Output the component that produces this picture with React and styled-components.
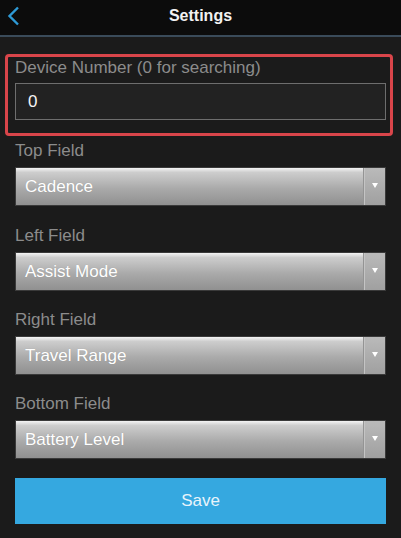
import React from 'react';
import styled, { createGlobalStyle } from 'styled-components';

const GlobalStyle = createGlobalStyle`
  html, body {
    margin: 0;
    padding: 0;
    background: #1b1b1b;
    font-family: "Liberation Sans", Arial, sans-serif;
  }
`;

const Page = styled.div`
  width: 401px;
  height: 538px;
  background: #1b1b1b;
  overflow: hidden;
`;

const Header = styled.div`
  position: relative;
  height: 35px;
  background: #0c0c0c;
  border-bottom: 2px solid #3a4b5a;
  display: flex;
  align-items: center;
  justify-content: center;
`;

const Back = styled.svg`
  position: absolute;
  left: 7px;
  top: 6px;
`;

const Title = styled.div`
  color: #f2f2f2;
  font-size: 16px;
  font-weight: bold;
  margin-top: -4px;
`;

const Body = styled.div`
  padding: 17px 15px 0 15px;
  display: flex;
  flex-direction: column;
`;

const Highlight = styled.div`
  margin: 0 -7px 0 -10px;
  padding: 0 4px 13px 7px;
  border: 3px solid #d9454a;
  border-radius: 4px;
  display: flex;
  flex-direction: column;
`;

const Field = styled.div`
  display: flex;
  flex-direction: column;
  margin-top: ${p => p.$top}px;
`;

const Label = styled.div`
  color: #8c8c8c;
  font-size: 17px;
  line-height: 18px;
  margin-top: ${p => p.$top || 0}px;
  margin-bottom: ${p => p.$gap || 7}px;
`;

const Input = styled.div`
  height: 35px;
  border: 1px solid #6e6e6e;
  background: #222222;
  color: #f4f4f4;
  font-size: 17px;
  display: flex;
  align-items: center;
  padding-left: 12px;
`;

const Select = styled.div`
  height: 37px;
  border: 1px solid #3a3a3a;
  display: flex;
  background: linear-gradient(#f4f4f4 0%, #cdcdcd 12%, #aaaaaa 55%, #909090 100%);
`;

const SelectText = styled.div`
  flex: 1;
  display: flex;
  align-items: center;
  padding-left: 9px;
  color: #ffffff;
  font-size: 17px;
  text-shadow: 0 0 1px rgba(0, 0, 0, 0.15);
  border-right: 1px solid #c4c4c4;
  box-shadow: inset -1px 0 0 #949494;
`;

const Arrow = styled.div`
  width: 20px;
  background: linear-gradient(#bababa, #a0a0a0);
  display: flex;
  align-items: center;
  justify-content: center;
  &::after {
    content: '';
    border-left: 3px solid transparent;
    border-right: 3px solid transparent;
    border-top: 5px solid #ffffff;
    margin-top: -2px;
  }
`;

const SaveButton = styled.button`
  margin-top: 19px;
  height: 46px;
  border: none;
  background: #35a8e0;
  color: #e8f4fb;
  font-family: "Liberation Sans", Arial, sans-serif;
  font-size: 17px;
`;

const fields = [
  { label: 'Top Field', value: 'Cadence', top: 6 },
  { label: 'Left Field', value: 'Assist Mode', top: 21 },
  { label: 'Right Field', value: 'Travel Range', top: 20 },
  { label: 'Bottom Field', value: 'Battery Level', top: 20 },
];

export default function App() {
  return (
    <>
      <GlobalStyle />
      <Page>
        <Header>
          <Back width="14" height="20" viewBox="0 0 14 20">
            <path d="M11 1.5 L2.5 10 L11 18.5" fill="none" stroke="#2e9ad6" strokeWidth="2.4" />
          </Back>
          <Title>Settings</Title>
        </Header>
        <Body>
          <Highlight>
            <Label $top={2} $gap={6}>Device Number (0 for searching)</Label>
            <Input>0</Input>
          </Highlight>
          {fields.map(f => (
            <Field key={f.label} $top={f.top}>
              <Label>{f.label}</Label>
              <Select>
                <SelectText>{f.value}</SelectText>
                <Arrow />
              </Select>
            </Field>
          ))}
          <SaveButton>Save</SaveButton>
        </Body>
      </Page>
    </>
  );
}
